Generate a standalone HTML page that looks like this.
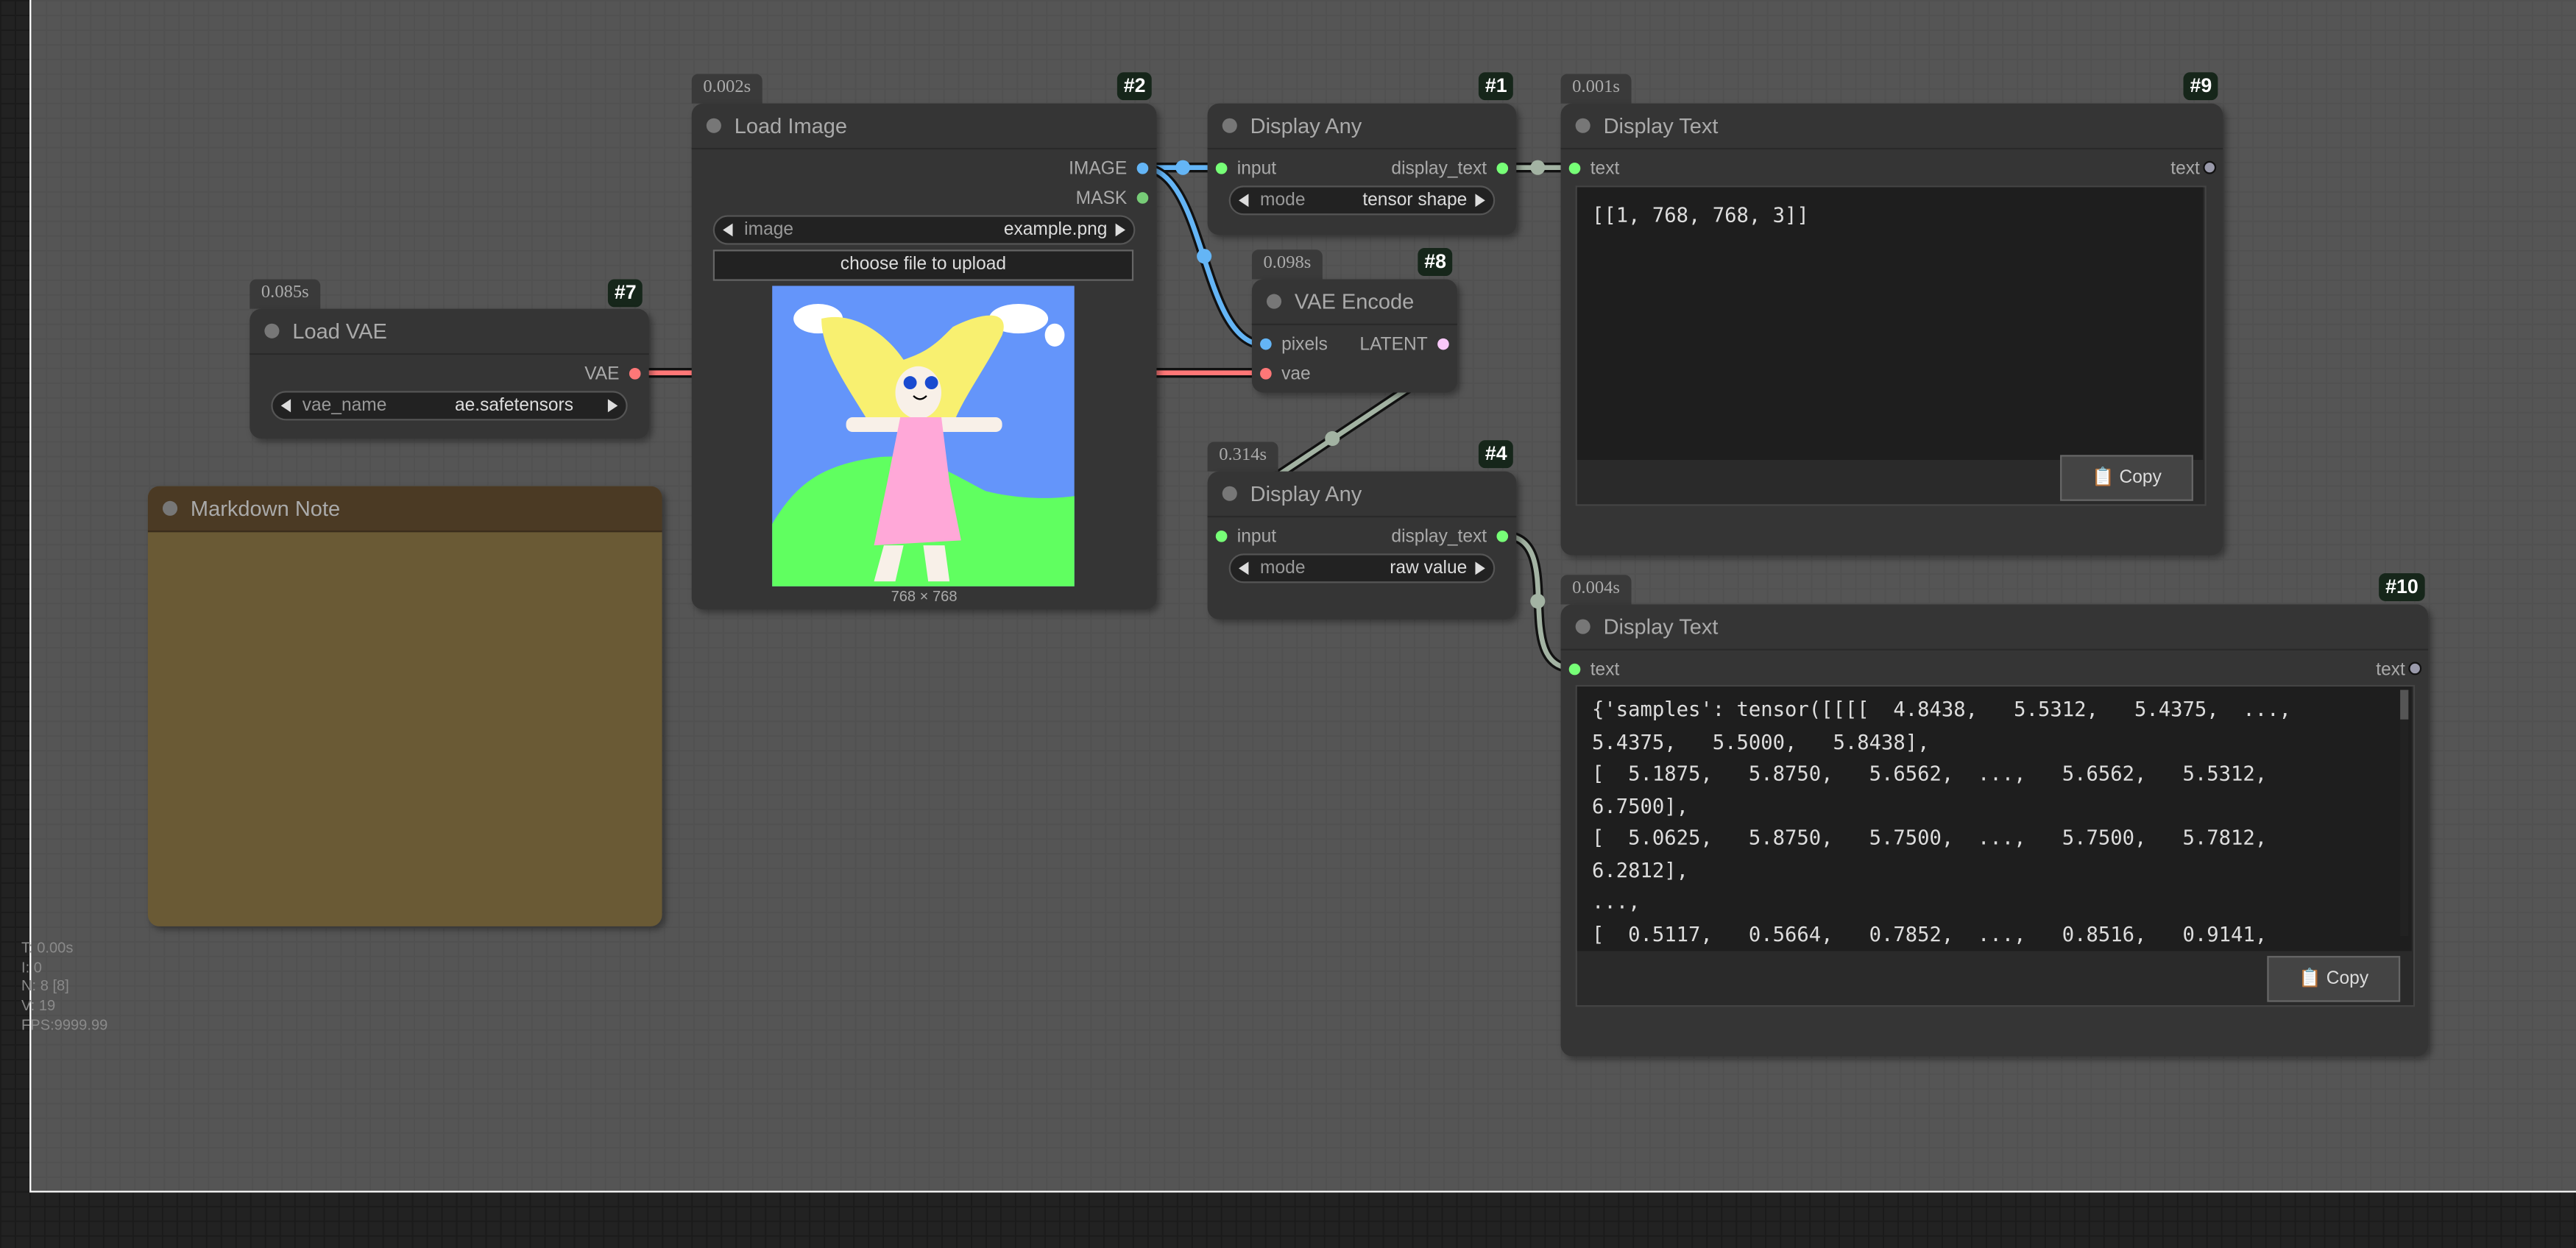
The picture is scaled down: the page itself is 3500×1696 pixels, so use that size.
<!DOCTYPE html>
<html><head><meta charset="utf-8"><style>
html,body{margin:0;padding:0;background:#222;width:3500px;height:1696px;overflow:hidden}
#s{position:absolute;left:0;top:0;width:1568px;height:760px;transform:scale(2.23214);transform-origin:0 0;font-family:"Liberation Sans",sans-serif;
background-color:#222;background-image:linear-gradient(#1b1b1b 1px,transparent 1px),linear-gradient(90deg,#1b1b1b 1px,transparent 1px);background-size:8.96px 8.96px}
.cv{position:absolute;left:18px;top:0;width:1560px;height:725px;border-left:1px solid #fff;border-bottom:1px solid #fff;background-color:#555;
background-image:linear-gradient(#515151 1px,transparent 1px),linear-gradient(90deg,#515151 1px,transparent 1px);background-size:8.96px 8.96px}
.a{position:absolute}
.node{position:absolute;background:#353535;border-radius:7px;box-shadow:2px 2px 4px rgba(0,0,0,.35)}
.tt{height:27px;border-bottom:1px solid #2a2a2a;color:#aaa;font-size:13px;line-height:27px;padding-left:26px;position:relative}
.tt:before{content:"";position:absolute;left:9px;top:9px;width:9px;height:9px;border-radius:50%;background:#777}
.bd{position:absolute;background:#3a3a3a;color:#aaa;font-family:"Liberation Serif",serif;font-size:11px;border-radius:4px 4px 0 0;height:18px;line-height:17px;padding:0 7px}
.hs{position:absolute;background:#16261a;color:#fff;font-weight:bold;font-size:12px;border-radius:4px;height:17px;line-height:17px;padding:0 4px}
.lb{position:absolute;color:#aaa;font-size:11px;line-height:12px}
.dot{position:absolute;width:7px;height:7px;border-radius:50%}
.cb{position:absolute;background:#222;border:1px solid #555;border-radius:10px;height:16px;color:#ddd;font-size:11px;line-height:16px}
.cb .l{position:absolute;left:6px;color:#999}
.cb .r{position:absolute;right:16px}
.cb .al{position:absolute;left:5px;top:4px;border:4px solid transparent;border-right:6px solid #ddd;border-left:0}
.cb .ar{position:absolute;right:5px;top:4px;border:4px solid transparent;border-left:6px solid #ddd;border-right:0}
.mono{font-family:"DejaVu Sans Mono","Liberation Mono",monospace;font-size:12.2px;line-height:19.5px;color:#ddd;white-space:pre}
.copy{position:absolute;background:#444;border:1px solid #666;color:#ddd;font-size:11px;text-align:center;line-height:26px}
</style></head><body><div id="s">
<div class="cv"></div>
<svg class="a" style="left:0;top:0" width="1568" height="760">
<g fill="none" stroke-linecap="round">
<path d="M387,227 L770,227" stroke="#111" stroke-width="6"/><path d="M387,227 L770,227" stroke="#f77" stroke-width="3"/>
<path d="M695,102 L743,102" stroke="#111" stroke-width="6"/><path d="M695,102 L743,102" stroke="#64b5f6" stroke-width="3"/>
<path d="M695,102 C735,102 730,210 770,210" stroke="#111" stroke-width="6"/><path d="M695,102 C735,102 730,210 770,210" stroke="#64b5f6" stroke-width="3"/>
<path d="M915,102 L958,102" stroke="#111" stroke-width="6"/><path d="M915,102 L958,102" stroke="#a3b3a3" stroke-width="3"/>
<path d="M870,228 L750,308" stroke="#111" stroke-width="6"/><path d="M870,228 L750,308" stroke="#a3b3a3" stroke-width="3"/>
<path d="M915,326 C955,326 918,407 958,407" stroke="#111" stroke-width="6"/><path d="M915,326 C955,326 918,407 958,407" stroke="#a3b3a3" stroke-width="3"/>
</g>
<circle cx="720" cy="102" r="4.5" fill="#64b5f6"/><circle cx="733" cy="156" r="4.5" fill="#64b5f6"/>
<circle cx="936" cy="102" r="4.5" fill="#a3b3a3"/><circle cx="811" cy="267" r="4.5" fill="#a3b3a3"/><circle cx="936" cy="366" r="4.5" fill="#a3b3a3"/>
</svg>

<!-- Load VAE -->
<div class="bd" style="left:152px;top:170px">0.085s</div><div class="hs" style="left:370px;top:170px">#7</div>
<div class="node" style="left:152px;top:188px;width:243px;height:79px"><div class="tt">Load VAE</div>
<div class="lb" style="right:18px;top:34px">VAE</div><div class="dot" style="right:5px;top:36px;background:#f77"></div>
<div class="cb" style="left:13px;top:50px;width:215px"><span class="al"></span><span class="l" style="left:18px">vae_name</span><span class="r" style="right:32px">ae.safetensors</span><span class="ar"></span></div>
</div>

<!-- Markdown -->
<div class="node" style="left:90px;top:296px;width:313px;height:268px;background:#6a5a35;overflow:hidden"><div class="tt" style="background:#4b3a24;border-bottom-color:#3a2d1c">Markdown Note</div></div>

<!-- Load Image -->
<div class="bd" style="left:421px;top:45px">0.002s</div><div class="hs" style="left:680px;top:44px">#2</div>
<div class="node" style="left:421px;top:63px;width:283px;height:308px"><div class="tt">Load Image</div>
<div class="lb" style="right:18px;top:34px">IMAGE</div><div class="dot" style="right:5px;top:36px;background:#64b5f6"></div>
<div class="lb" style="right:18px;top:52px">MASK</div><div class="dot" style="right:5px;top:54px;background:#7c7"></div>
<div class="cb" style="left:13px;top:68px;width:255px"><span class="al"></span><span class="l" style="left:18px">image</span><span class="r">example.png</span><span class="ar"></span></div>
<div class="a" style="left:13px;top:89px;width:254px;height:17px;background:#222;border:1px solid #666;color:#ddd;font-size:11px;text-align:center;line-height:17px">choose file to upload</div>
<svg class="a" style="left:49px;top:111px" width="184" height="183" viewBox="0 0 184 183">
<rect width="184" height="183" fill="#6495fa"/>
<path d="M0,145 C15,120 30,110 60,105 C90,100 110,115 130,125 C150,130 170,130 184,128 L184,183 L0,183Z" fill="#60ff60"/>
<g fill="#fff"><ellipse cx="28" cy="20" rx="15" ry="9"/><ellipse cx="150" cy="20" rx="18" ry="9"/><ellipse cx="172" cy="30" rx="6" ry="7"/></g>
<path d="M30,20 C50,15 70,30 80,45 C95,40 100,35 110,25 C130,15 145,15 140,30 C130,50 115,70 110,85 L95,85 C85,80 75,78 60,85 C45,60 30,40 30,20Z" fill="#f8f070"/>
<ellipse cx="89" cy="65" rx="14" ry="16" fill="#f8f0e8"/>
<circle cx="84" cy="59" r="4" fill="#1a4bd0"/><circle cx="97" cy="59" r="4" fill="#1a4bd0"/>
<path d="M86,67 Q90,71 94,67" stroke="#000" fill="none"/>
<rect x="45" y="80" width="95" height="9" rx="4" fill="#f8f0e8"/>
<path d="M78,80 L103,80 L108,120 L115,155 L62,158 L70,120Z" fill="#ffa8d8"/>
<path d="M68,158 L62,180 L75,180 L80,158 M92,158 L95,180 L108,180 L105,158Z" fill="#f8f0e8"/>
</svg>
<div class="a" style="left:0;width:283px;top:295px;text-align:center;color:#aaa;font-size:9px">768 × 768</div>
</div>

<!-- Display Any #1 -->
<div class="hs" style="left:900px;top:44px">#1</div>
<div class="node" style="left:735px;top:63px;width:188px;height:80px"><div class="tt">Display Any</div>
<div class="dot" style="left:5px;top:36px;background:#7f7"></div><div class="lb" style="left:18px;top:34px">input</div>
<div class="lb" style="right:18px;top:34px">display_text</div><div class="dot" style="right:5px;top:36px;background:#7f7"></div>
<div class="cb" style="left:13px;top:50px;width:160px"><span class="al"></span><span class="l" style="left:18px">mode</span><span class="r">tensor shape</span><span class="ar"></span></div>
</div>

<!-- VAE Encode -->
<div class="bd" style="left:762px;top:152px">0.098s</div><div class="hs" style="left:863px;top:151px">#8</div>
<div class="node" style="left:762px;top:170px;width:125px;height:69px"><div class="tt">VAE Encode</div>
<div class="dot" style="left:5px;top:36px;background:#64b5f6"></div><div class="lb" style="left:18px;top:34px">pixels</div>
<div class="lb" style="right:18px;top:34px">LATENT</div><div class="dot" style="right:5px;top:36px;background:#f8c8f8"></div>
<div class="dot" style="left:5px;top:54px;background:#f77"></div><div class="lb" style="left:18px;top:52px">vae</div>
</div>

<!-- Display Any #4 -->
<div class="bd" style="left:735px;top:269px">0.314s</div><div class="hs" style="left:900px;top:268px">#4</div>
<div class="node" style="left:735px;top:287px;width:188px;height:90px"><div class="tt">Display Any</div>
<div class="dot" style="left:5px;top:36px;background:#7f7"></div><div class="lb" style="left:18px;top:34px">input</div>
<div class="lb" style="right:18px;top:34px">display_text</div><div class="dot" style="right:5px;top:36px;background:#7f7"></div>
<div class="cb" style="left:13px;top:50px;width:160px"><span class="al"></span><span class="l" style="left:18px">mode</span><span class="r">raw value</span><span class="ar"></span></div>
</div>

<!-- Display Text #9 -->
<div class="bd" style="left:950px;top:45px">0.001s</div><div class="hs" style="left:1329px;top:44px">#9</div>
<div class="node" style="left:950px;top:63px;width:403px;height:275px"><div class="tt">Display Text</div>
<div class="dot" style="left:5px;top:36px;background:#7f7"></div><div class="lb" style="left:18px;top:34px">text</div>
<div class="lb" style="right:14px;top:34px">text</div><div class="dot" style="right:4px;top:35px;background:#99a;border:1px solid #111;width:6px;height:6px"></div>
<div class="a" style="left:9px;top:50px;width:382px;height:193px;background:#2a2a2a;border:1px solid #444"></div>
<div class="a mono" style="left:10px;top:51px;width:372px;height:158px;background:#1e1e1e;padding:8px 0 0 9px">[[1, 768, 768, 3]]</div>
<div class="copy" style="left:304px;top:214px;width:79px;height:26px">📋 Copy</div>
</div>

<!-- Display Text #10 -->
<div class="bd" style="left:950px;top:350px">0.004s</div><div class="hs" style="left:1448px;top:349px">#10</div>
<div class="node" style="left:950px;top:368px;width:528px;height:275px"><div class="tt">Display Text</div>
<div class="dot" style="left:5px;top:36px;background:#7f7"></div><div class="lb" style="left:18px;top:34px">text</div>
<div class="lb" style="right:14px;top:34px">text</div><div class="dot" style="right:4px;top:35px;background:#99a;border:1px solid #111;width:6px;height:6px"></div>
<div class="a" style="left:9px;top:49px;width:509px;height:194px;background:#2a2a2a;border:1px solid #444"></div>
<div class="a mono" style="left:10px;top:50px;width:499px;height:156px;background:#1e1e1e;padding:5px 0 0 9px;overflow:hidden">{'samples': tensor([[[[  4.8438,   5.5312,   5.4375,  ...,
5.4375,   5.5000,   5.8438],
[  5.1875,   5.8750,   5.6562,  ...,   5.6562,   5.5312,
6.7500],
[  5.0625,   5.8750,   5.7500,  ...,   5.7500,   5.7812,
6.2812],
...,
[  0.5117,   0.5664,   0.7852,  ...,   0.8516,   0.9141,</div>
<div class="a" style="left:511px;top:52px;width:5px;height:150px;background:#222"><div style="height:18px;background:#555"></div></div>
<div class="copy" style="left:430px;top:214px;width:79px;height:26px">📋 Copy</div>
</div>

<div class="a" style="left:13px;top:572px;color:#8a8a8a;font-size:9px;line-height:11.7px">T: 0.00s<br>I: 0<br>N: 8 [8]<br>V: 19<br>FPS:9999.99</div>
</div></body></html>
